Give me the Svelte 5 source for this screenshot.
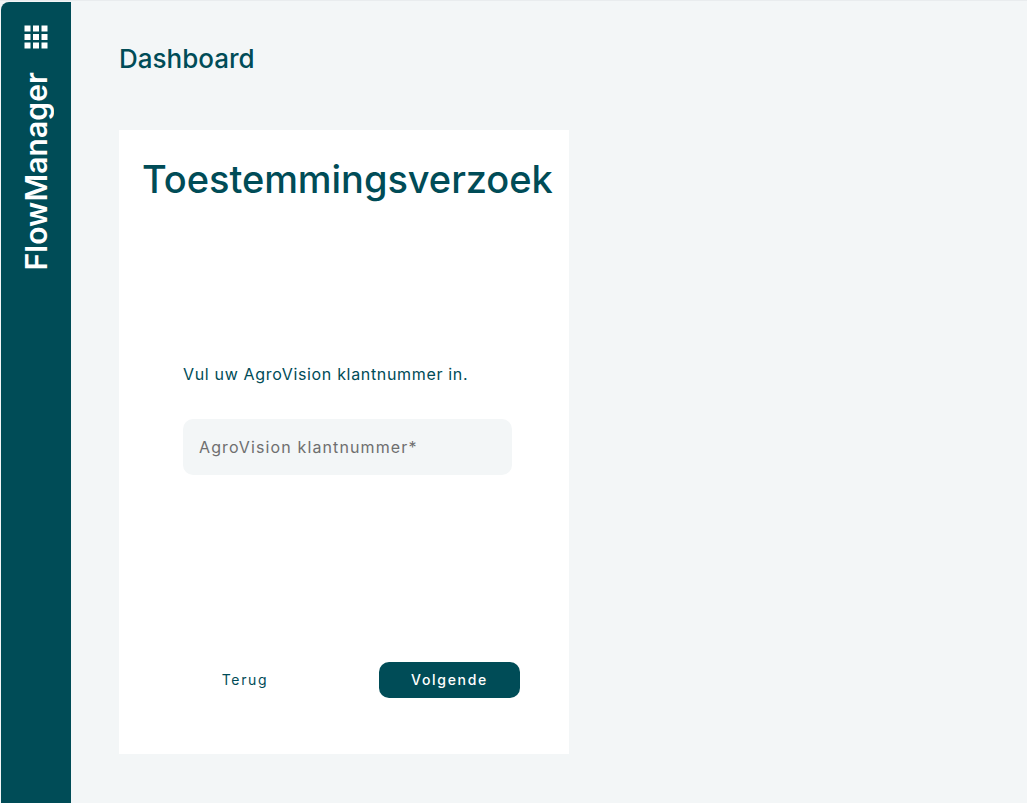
<script>
  let klantnummer = $state('');
</script>

<div class="shell">
  <aside class="sidebar">
    <svg class="apps" width="24" height="24" viewBox="0 0 24 24" aria-hidden="true">
      {#each [0, 8.5, 17] as y}
        {#each [0, 8.5, 17] as x}
          <rect x={x + 0.5} y={y + 0.5} width="6" height="6" fill="#fff" />
        {/each}
      {/each}
    </svg>
    <div class="brand">FlowManager</div>
  </aside>

  <main class="main">
    <h1 class="page-title">Dashboard</h1>

    <section class="card">
      <h2>Toestemmingsverzoek</h2>

      <div class="form">
        <p>Vul uw AgroVision klantnummer in.</p>
        <input type="text" placeholder="AgroVision klantnummer*" bind:value={klantnummer} />
      </div>

      <div class="actions">
        <button class="back">Terug</button>
        <button class="next">Volgende</button>
      </div>
    </section>
  </main>
</div>

<style>
  :global(body) {
    margin: 0;
    background: #f3f6f7;
  }

  .shell {
    display: flex;
    height: 803px;
    box-sizing: border-box;
    padding: 1px 0 0 1px;
    border-top: 1px solid #e9ecee;
    font-family: "Inter", "Liberation Sans", sans-serif;
    color: #004c57;
    overflow: hidden;
  }

  .sidebar {
    width: 70px;
    flex: none;
    background: #004c57;
    border-top-left-radius: 8px;
    display: flex;
    flex-direction: column;
    align-items: center;
    padding-top: 23px;
    box-sizing: border-box;
  }

  .apps {
    display: block;
  }

  .brand {
    writing-mode: vertical-rl;
    transform: rotate(180deg);
    margin-top: 23px;
    color: #fff;
    font-size: 30px;
    font-weight: 600;
    line-height: 32px;
    letter-spacing: 0.1px;
  }

  .main {
    flex: 1;
    padding: 41px 48px 0;
    min-width: 0;
  }

  .page-title {
    margin: 0;
    font-size: 26px;
    line-height: 32px;
    font-weight: 500;
  }

  .card {
    width: 450px;
    height: 624px;
    margin-top: 55px;
    background: #fff;
    box-sizing: border-box;
    padding: 24px 16px 56px 23px;
    display: flex;
    flex-direction: column;
  }

  h2 {
    margin: 0;
    font-size: 38px;
    line-height: 50px;
    font-weight: 500;
    letter-spacing: -0.05px;
    white-space: nowrap;
  }

  .form {
    margin: 158px 41px 0 41px;
  }

  .form p {
    margin: 0;
    font-size: 16px;
    line-height: 24px;
    letter-spacing: 0.67px;
  }

  input {
    display: block;
    width: 100%;
    height: 56px;
    margin-top: 33px;
    box-sizing: border-box;
    padding: 0 16px;
    border: 0;
    border-radius: 10px;
    background: #f3f6f7;
    font: inherit;
    font-size: 16px;
    letter-spacing: 1.12px;
    color: #004c57;
    outline: none;
  }

  input::placeholder {
    color: #6f6f6f;
    opacity: 1;
  }

  .actions {
    margin-top: auto;
    display: flex;
    justify-content: space-between;
    align-items: center;
    padding: 0 33px 0 41px;
  }

  button {
    font: inherit;
    font-size: 14px;
    letter-spacing: 1.7px;
    height: 36px;
    padding: 0 0 2px;
    border: 0;
    border-radius: 10px;
    cursor: pointer;
  }

  .back {
    width: 124px;
    background: none;
    color: #004c57;
  }

  .next {
    width: 141px;
    background: #004c57;
    color: #fff;
    font-weight: 500;
  }
</style>
